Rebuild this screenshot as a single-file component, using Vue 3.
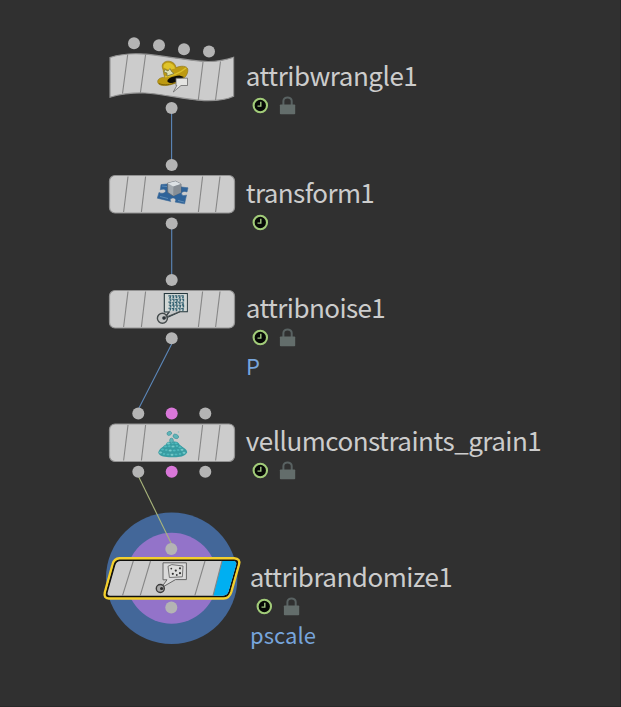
<script setup>
const stripes = [[128, 123.6], [145.6, 141.4], [202.6, 198.4], [220, 215.6]]
const plain = [
  { y: 175.5, kind: 'transform' },
  { y: 290.5, kind: 'noise' },
  { y: 424, kind: 'grain' }
]
const dots = [
  [134, 43.2], [159, 45.2], [184, 49.3], [209, 51.6], [171.6, 108],
  [171.7, 165], [171.7, 223.5], [171.7, 280], [171.7, 338.2],
  [138.3, 413.4], [171.7, 413.4, 1], [205.3, 413.4],
  [138.3, 471.8], [171.7, 471.8, 1], [205.3, 471.8],
  [171.3, 549], [171.3, 607.5]
]
const labels = [
  { name: 'attribwrangle1', x: 246.5, y: 86, w: 172, lock: true },
  { name: 'transform1', x: 246.5, y: 203, w: 129, lock: false },
  { name: 'attribnoise1', x: 246.5, y: 318, w: 140, lock: true, attr: 'P', aw: 13 },
  { name: 'vellumconstraints_grain1', x: 246.5, y: 451, w: 296, lock: true },
  { name: 'attribrandomize1', x: 250.5, y: 587, w: 203, lock: true, attr: 'pscale', aw: 66 }
]
const noise = []
for (let r = 0; r < 5; r++) for (let c = 0; c < 5; c++) noise.push([168.4 + c * 3.2 + (r % 2) * 0.4, 295.9 + r * 3.1 + ((r * c) % 3) * 0.3])
const grains = [
  [160.5, 452.5], [164, 454], [168, 454.5], [172, 454.8], [176, 454.5], [180, 454], [184, 452.8],
  [162.5, 449.5], [166.3, 450], [170.2, 450.5], [174.2, 450.5], [178.2, 450], [182, 449.8],
  [165.5, 446.5], [169.2, 446.2], [173, 446.5], [177, 446], [180, 447.3], [168.5, 443.5], [172.3, 443.2], [176, 443.3]
]
</script>

<template>
  <main class="network">
    <svg class="canvas" width="621" height="707" viewBox="0 0 621 707">
      <circle class="ring-outer" cx="171.7" cy="578.2" r="65.7" />
      <circle class="ring-inner" cx="171.7" cy="578.2" r="45.5" />

      <g class="wires">
        <path d="M171.6 108V165M171.7 223V280M171.7 344L139 408" />
        <path class="selected-wire" d="M138.8 477L171.3 543.5" />
      </g>

      <!-- wrangle node -->
      <g>
        <path class="body" d="M110 57.5C121 54 132 53 146 54.2C166 56 190 61 208 61.5C220 61.5 226 60 233.6 57.3V96.3C226 100 217 101 204 100.6C186 100 165 94 145 93C129 92.7 119 94.5 110 97.2Z" />
        <path class="stripe" d="M127.7 54.5L122.5 93.5M145.6 54.5L140.4 92.7M203 62L198.3 100M220.5 61.5L215.5 100.3" />
        <path d="M162.5 68C161 63.5 165 60.7 169.2 61.2C173 61.7 175.6 64 176 67.6C181 65.5 187 65.6 187.8 69.2C188.5 74.5 184 80 176 83C169 86 159 87 157.8 82.5C157 79.5 160 77.3 165 77.2C163 74 164 71.5 162.5 68Z" fill="#bd9a12" stroke="#8e7412" stroke-width=".6" />
        <path d="M163.5 67.5C163 63.5 167 62 170 63C173 64 174.6 66 175 68.5L169 70Z" fill="#dfc42b" />
        <path d="M165 76.8C171 76.4 180 73 186 68" fill="none" stroke="#dcc02b" stroke-width="1.4" />
        <path d="M164.8 69.5L168 71L170 68.5L171.5 71.5L174 73.5L170 75L167 76L167 73L164 72Z" fill="#dfe2b4" stroke="#6d6e42" stroke-width=".7" />
        <path d="M167.3 81C168 78 173 76.2 179.5 75.6L184 77L176 82C173 83.5 168 83.6 167.3 81Z" fill="#0d0c06" />
        <path d="M159 83.5C164 86 171 84.5 175 82.6" fill="none" stroke="#7c6206" stroke-width="1" />
        <path d="M176 78.2H187.5V85.5H181L173.3 92L176.8 85.5H176Z" fill="#e4e4e2" stroke="#686868" stroke-width=".8" />
      </g>

      <g v-for="n in plain" :key="n.kind">
        <rect class="body" x="109.5" :y="n.y" width="125" height="37.5" rx="5.5" />
        <path v-for="(s, i) in stripes" :key="i" class="stripe" :d="`M${s[0]} ${n.y + 1}L${s[1]} ${n.y + 36.5}`" />
      </g>

      <!-- transform icon -->
      <g>
        <path d="M161 184.6L167 184L180 186.8L188 187.8L187 192C184.5 190.8 181 191.8 181.6 194C182.2 196.3 184.8 195.6 186.5 195L184.6 203.8L175 202C176.8 199.8 175 197.8 172.5 198C170 198.2 169.7 200 170.8 201.4L157.3 198.2L159 192.4C161.6 193.9 165.5 193.4 165.6 191.1C165.6 188.9 162.5 188.8 160.3 189.8Z" fill="#2f6399" stroke="#3f6c98" stroke-width=".6" />
        <path d="M162 186L167 186.5M160 196.5L168 198.5M178 200.5L184 202" stroke="#5d8bb6" stroke-width="1" />
        <path d="M167.5 183.2L175.5 181.2L181 184V192.4L173.2 196L167.8 192.4Z" fill="#a4abb1" stroke="#59636d" stroke-width=".7" />
        <path d="M167.5 183.2L175.5 181.2L181 184L173.4 186.6Z" fill="#dce1e4" />
        <path d="M173.4 186.6L181 184V192.4L173.2 196Z" fill="#878e95" />
      </g>

      <!-- noise icon -->
      <g>
        <path d="M164.3 312V293.5H187.3V311.7H180L164.5 318.7L169 312Z" fill="#c5c9ca" stroke="#25383d" stroke-width="1.1" />
        <rect x="165" y="294.2" width="21.7" height="16.8" fill="#d2d8d6" />
        <path v-for="(p, i) in noise" :key="i" :d="`M${p[0]} ${p[1]}h2v1.7h-1.1`" fill="none" stroke="#326070" stroke-width="1.1" />
        <path d="M169.5 311.6L164 318L180 311.6" fill="none" stroke="#4a5052" stroke-width="1.1" />
        <circle cx="162.4" cy="318.2" r="5" fill="#bfc2c2" fill-opacity=".65" stroke="#454b4c" stroke-width="1.4" />
        <circle cx="164" cy="318" r="1.8" fill="#293035" />
      </g>

      <!-- grain icon -->
      <g>
        <path d="M158.4 453C158.6 447.5 165 447 166.5 443.5C169 441 176 440.8 178.8 443.2C180 447 187 447.5 187.2 452.5C184.5 457.4 177 457.4 171.5 457.2C165 457 160 457 158.4 453Z" fill="#379da3" />
        <ellipse v-for="(g, i) in grains" :key="i" :cx="g[0]" :cy="g[1]" rx="1.75" ry="1.35" :fill="i % 3 ? '#4fb9bd' : '#74cbcb'" stroke="#338f96" stroke-width=".4" />
        <g fill="#5fb5b9" stroke="#3b8f96" stroke-width=".6">
          <ellipse cx="169.3" cy="433.4" rx="2.4" ry="1.9" transform="rotate(-25 169.3 433.4)" />
          <ellipse cx="175.8" cy="436.4" rx="2.9" ry="2.1" transform="rotate(25 175.8 436.4)" />
          <ellipse cx="171.5" cy="440.6" rx="1.9" ry="2.5" />
        </g>
        <circle cx="178.5" cy="432" r=".8" fill="#86c5c6" />
      </g>

      <!-- selected node -->
      <g>
        <path d="M119.5 558.3H234.2Q240.6 558.8 239 564.5L231.3 592Q229.3 598.5 223.5 598.5H108.8Q103.5 598.3 104.8 592.5L112.5 564.5Q114 558.5 119.5 558.3Z" fill="#17140a" stroke="#f3cf2d" stroke-width="2.4" />
        <path d="M120.5 560.5H233.5Q237.9 561 236.7 565L229.2 591.5Q227.8 596.2 222.8 596.3H110Q106 596 107.1 592L114.7 565Q116.2 560.5 120.5 560.5Z" fill="#cccccc" stroke="#10100e" stroke-width="1.2" />
        <path d="M222 561.1H233.5Q237.2 561.4 236.1 565L228.6 591.3Q227.3 595.6 222.8 595.7H213Z" fill="#00aff1" />
        <path class="stripe" d="M133.3 561L122.5 595.7M150.5 561L140.2 595.7M205 561L194.8 595.7M222 561L213 595.7" />
        <path d="M163 579.8V562.8H186.4V579.6H175.5L161 588L167 579.8Z" fill="#dadada" stroke="#666666" stroke-width="1" />
        <path d="M168 566.3L171.8 564.6L183 566L182.4 576.8L169.4 577.5Z" fill="#dededc" stroke="#666666" stroke-width=".9" />
        <g fill="#333333">
          <circle cx="171.3" cy="568.6" r=".9" /><circle cx="180" cy="568.3" r="1.1" />
          <circle cx="175.8" cy="570.6" r="1.1" /><circle cx="172.8" cy="573.8" r="1.1" />
          <circle cx="180" cy="573.2" r="1.1" /><circle cx="176.8" cy="575" r=".9" />
        </g>
        <circle cx="160.3" cy="588.5" r="4" fill="#a9a9a9" stroke="#3c3c3c" stroke-width="1.4" />
        <circle cx="161.6" cy="588.5" r="1.6" fill="#303030" />
      </g>

      <circle v-for="(d, i) in dots" :key="'d' + i" :cx="d[0]" :cy="d[1]" r="6" :class="d[2] ? 'dot constraint' : 'dot'" />

      <g v-for="l in labels" :key="l.name">
        <text class="name" :x="l.x - 0.7" :y="l.y" :textLength="l.w">{{ l.name }}</text>
        <g :transform="`translate(${l.x + 13.8} ${l.y + 19.5})`">
          <circle r="6.7" fill="#060806" stroke="#a2cc79" stroke-width="2.1" />
          <path d="M.5-3.8V.6H-2.8" fill="none" stroke="#a3c882" stroke-width="1.4" />
        </g>
        <g v-if="l.lock" :transform="`translate(${l.x + 33.4} ${l.y + 10.2})`">
          <path d="M3.5 9V4.9C3.5 .1 11.8 .1 11.8 4.9V9" fill="none" stroke="#596262" stroke-width="2" />
          <rect y="8.2" width="15.3" height="9.9" rx=".8" fill="#636d6b" />
        </g>
        <text v-if="l.attr" class="attr" :x="l.x - 0.5" :y="l.y + 56.5" :textLength="l.aw">{{ l.attr }}</text>
      </g>
      <path class="pane-edge" d="M620.5 0V706.5H0" />
    </svg>
  </main>
</template>

<style scoped>
.network { width: 621px; height: 707px; overflow: hidden; background: #303030; }
.canvas { display: block; font-family: "Noto Sans CJK SC", "Noto Sans", sans-serif; }
.body { fill: #cccccc; stroke: #929292; stroke-width: 1.2; }
.stripe { fill: none; stroke: #868686; stroke-width: 1.1; }
.dot { fill: #b4b4b4; }
.constraint { fill: #d977d9; }
.wires path { fill: none; stroke: #5b86b8; stroke-width: 1.1; }
.wires .selected-wire { stroke: #a8b57b; }
.ring-outer { fill: #436799; }
.ring-inner { fill: #9373c9; }
.name { fill: #cccccc; font-size: 26px; }
.attr { fill: #77a5dc; font-size: 22px; }
.pane-edge { fill: none; stroke: #282828; stroke-width: 1; }
</style>

<style>
body { margin: 0; background: #303030; }
</style>
